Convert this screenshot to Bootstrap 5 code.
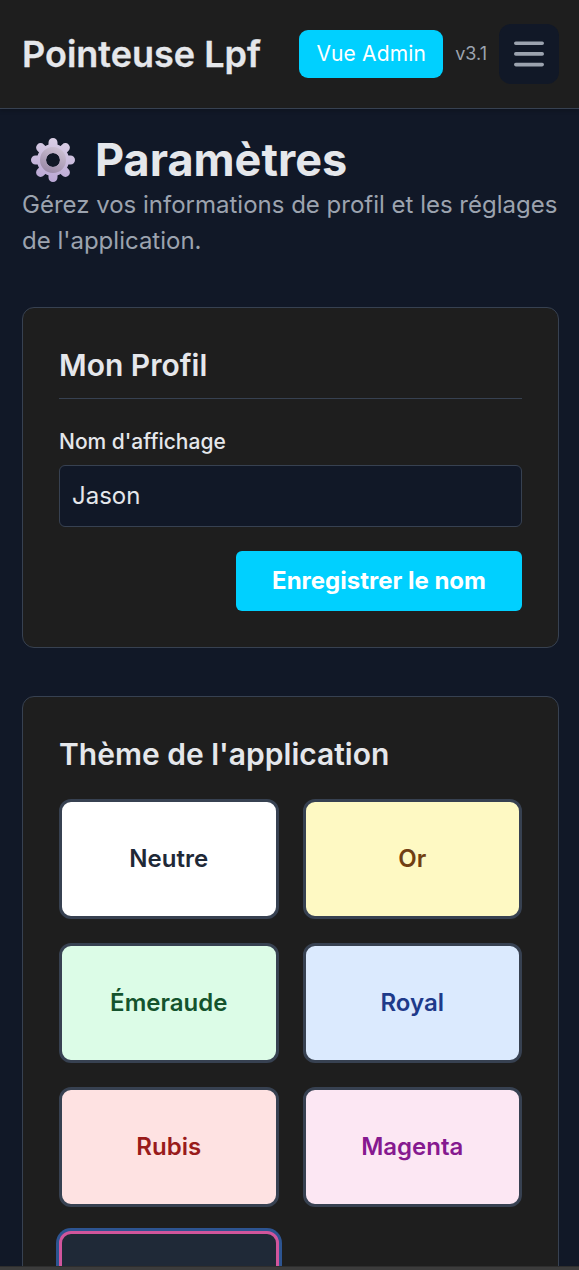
<!DOCTYPE html>
<html lang="fr">
<head>
<meta charset="utf-8">
<meta name="viewport" content="width=device-width, initial-scale=1">
<title>Paramètres - Pointeuse Lpf</title>
<link href="https://cdn.jsdelivr.net/npm/bootstrap@5.3.0/dist/css/bootstrap.min.css" rel="stylesheet">
<style>
  :root { --page: #111827; --surface: #1e1e1e; --line: #374151; --ink: #e5e7eb; --muted: #9ca3af; --accent: #00d0ff; }
  body { font-family: Inter, "Liberation Sans", sans-serif; font-size: 24px; line-height: 36px; color: var(--ink); background: var(--page); }
  .app { height: 1270px; }
  .topbar { height: 109px; padding: 0 20px 0 22px; background: var(--surface); border-bottom: 1px solid var(--line); box-shadow: 0 2px 4px rgba(0,0,0,.2); z-index: 1; }
  .app-name { font-size: 36px; line-height: 48px; font-weight: 600; color: var(--ink); -webkit-text-stroke: .3px; }
  .btn-accent, .btn-accent:hover { background: var(--accent); color: #fff; border: 0; border-radius: 6px; }
  .btn-admin { width: 144px; height: 48px; font-size: 21px; font-weight: 400; letter-spacing: .15px; line-height: 30px; padding: 0; border-radius: 9px; }
  .version { font-size: 18px; line-height: 24px; color: var(--muted); margin: 0 12px; }
  .menu-btn, .menu-btn:hover { width: 60px; height: 60px; background: var(--page); border-radius: 12px; color: var(--muted); border: 0; }
  .content { padding: 24px 20px 0 22px; }
  .page-title { font-size: 45px; line-height: 54px; font-weight: 700; }
  .gear { width: 46px; height: 46px; margin: 0 19px 0 8px; }
  .intro { color: var(--muted); margin-bottom: 48px; }
  .panel { background: var(--surface); border: 1px solid var(--line); border-radius: 12px; padding: 36px; margin-bottom: 48px; }
  .panel-title { font-size: 30px; line-height: 42px; font-weight: 600; margin: 0; }
  .ruled { padding-bottom: 12px; border-bottom: 1px solid var(--line); }
  .field-label { font-size: 21px; line-height: 30px; font-weight: 500; margin: 28px 0 8px; }
  .field, .field:focus { height: 62px; padding: 11px 12px 13px; font-size: 24px; line-height: 36px; border-radius: 6px; color: var(--ink); background: var(--page); border: 1px solid var(--line); }
  .btn-save { width: 286px; height: 60px; font-size: 24px; font-weight: 700; line-height: 36px; padding: 0; }
  .themes { display: grid; grid-template-columns: 1fr 1fr; gap: 24px; margin-top: 24px; }
  .theme { height: 120px; border: 3px solid var(--line); border-radius: 12px; font-size: 24px; font-weight: 600; }
  .t-neutre { background: #fff; color: #1f2937; }
  .t-or { background: #fef9c3; color: #713f12; }
  .t-emeraude { background: #dcfce7; color: #14532d; }
  .t-royal { background: #dbeafe; color: #1e3a8a; }
  .t-rubis { background: #fee2e2; color: #991b1b; }
  .t-magenta { background: #fce7f3; color: #86198f; }
  .t-active { background: #1f2937; border-color: #d0559c; box-shadow: 0 0 0 3px #2d5491; }
  .edge { height: 4px; background: #3c3c3c; border-top: 1px solid #2e2e2e; z-index: 2; }
</style>
</head>
<body>
<div class="app d-flex flex-column overflow-hidden">
  <header class="topbar d-flex align-items-center flex-shrink-0 position-relative">
    <div class="app-name me-auto text-nowrap">Pointeuse Lpf</div>
    <button class="btn btn-accent btn-admin text-nowrap">Vue Admin</button>
    <span class="version">v3.1</span>
    <button class="btn menu-btn p-0 d-flex align-items-center justify-content-center" aria-label="Menu">
      <svg width="36" height="36" viewBox="0 0 36 36" fill="none" stroke="currentColor" stroke-width="3.6" stroke-linecap="round"><path d="M4.8 7.2h26.4M4.8 17.9h26.4M4.8 28.6h26.4"/></svg>
    </button>
  </header>

  <main class="content flex-fill overflow-hidden">
    <h1 class="page-title d-flex align-items-center m-0">
      <svg class="gear" viewBox="-23 -23 46 46" aria-hidden="true">
        <defs>
          <linearGradient id="metal" gradientUnits="userSpaceOnUse" x1="5" y1="-22" x2="-5" y2="22"><stop offset="0" stop-color="#dbd0e6"/><stop offset="1" stop-color="#b9a6d4"/></linearGradient>
          <linearGradient id="hub" gradientUnits="userSpaceOnUse" x1="7" y1="-12" x2="-5" y2="12"><stop offset="0" stop-color="#cdc1d3"/><stop offset="1" stop-color="#9b8aa8"/></linearGradient>
        </defs>
        <g fill="none" stroke="url(#metal)" stroke-width="9" stroke-linecap="round">
          <circle r="11.5"/>
          <path d="M0-14V-17.5M0 14V17.5M-14 0H-17.5M14 0H17.5M-10-10L-12.4-12.4M10-10L12.4-12.4M-10 10L-12.4 12.4M10 10L12.4 12.4"/>
        </g>
        <circle r="10" fill="none" stroke="url(#hub)" stroke-width="6"/>
      </svg>
      <span>Paramètres</span>
    </h1>
    <p class="intro">Gérez vos informations de profil et les réglages de l'application.</p>

    <section class="panel">
      <h2 class="panel-title ruled">Mon Profil</h2>
      <label class="field-label d-block" for="name">Nom d'affichage</label>
      <input class="form-control field" id="name" type="text" value="Jason">
      <div class="d-flex justify-content-end mt-4"><button class="btn btn-accent btn-save">Enregistrer le nom</button></div>
    </section>

    <section class="panel">
      <h2 class="panel-title">Thème de l'application</h2>
      <div class="themes">
        <button class="theme t-neutre">Neutre</button>
        <button class="theme t-or">Or</button>
        <button class="theme t-emeraude">Émeraude</button>
        <button class="theme t-royal">Royal</button>
        <button class="theme t-rubis">Rubis</button>
        <button class="theme t-magenta">Magenta</button>
        <button class="theme t-active" aria-label="Sombre"></button>
      </div>
    </section>
  </main>
  <div class="edge flex-shrink-0"></div>
</div>
<script src="https://cdn.jsdelivr.net/npm/bootstrap@5.3.0/dist/js/bootstrap.bundle.min.js"></script>
</body>
</html>
